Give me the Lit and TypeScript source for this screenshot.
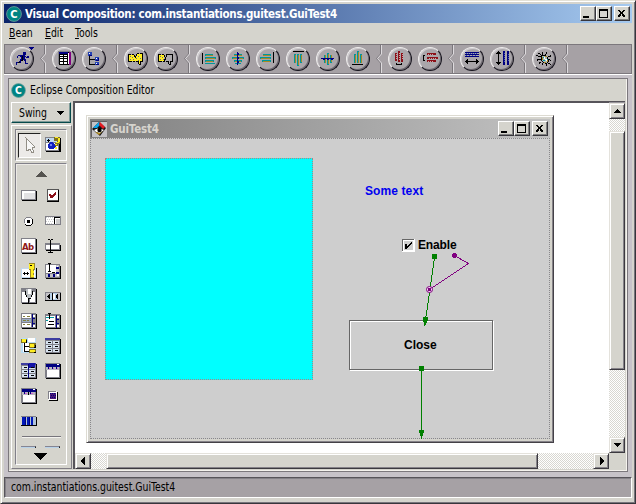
import { LitElement, html, svg, css } from "lit";
import { customElement } from "lit/decorators.js";

// A layer is a fill colour plus a list of "x,y,w,h" pixel blocks.
type Layer = [string, string];
type Icon = Layer[];

const blocks = (layers: Icon) =>
  layers.map(
    ([fill, list]) => svg`<path fill=${fill} d=${list
      .split(" ")
      .map((r) => {
        const [x, y, w, h] = r.split(",");
        return `M${x} ${y}h${w}v${h}h-${w}z`;
      })
      .join("")}></path>`
  );

const shift = (dx: number, dy: number, layers: Icon): Icon =>
  layers.map(([fill, list]) => [
    fill,
    list.split(" ").map((r) => {
      const [x, y, w, h] = r.split(",").map(Number);
      return [x + dx, y + dy, w, h].join();
    }).join(" "),
  ]);

const icon = (layers: Icon, extra: unknown = "", size = 16) =>
  html`<svg width=${size} height=${size} viewBox="0 0 ${size} ${size}" shape-rendering="crispEdges">${blocks(layers)}${extra}</svg>`;

const K = "#000", W = "#fff", N = "#000080", G = "#808088", L = "#c3c2c6", Y = "#ffee20", T = "#00969c", R = "#8c1018", O = "#a58a22";

// ---- toolbar glyphs, drawn in a 16x16 grid ----
const run: Icon = [
  [N, "8,1,3,3 6,4,4,2 5,5,5,1 6,6,4,3 3,4,3,1 2,5,1,2 9,5,2,1 11,6,3,1 12,5,2,1 5,8,3,2 8,8,3,1 10,9,1,4 10,12,3,1 4,10,2,2 1,11,4,1 1,12,1,2 9,9,1,1"],
  [K, "7,5,1,4 6,9,2,1 3,11,2,1"],
];
const tableProps: Icon = [
  [G, "0,0,12,1 0,0,1,13"], [K, "1,1,12,13"], [N, "1,1,9,2"],
  [W, "2,4,3,1 6,4,3,1 2,6,3,1 6,6,3,1 2,8,3,2 6,8,3,2 2,11,3,2 6,11,3,2 10,2,1,11"], ["#800080", "11,1,2,13"],
];
const tree: Icon = [
  ["#2442b4", "2,1,4,4 9,6,4,4 9,11,4,3"], [N, "3,4,3,1 10,9,3,1 10,13,3,1 12,7,1,2"],
  [K, "3,5,1,9 4,8,5,1 4,13,5,1"], [W, "3,2,1,1 10,7,1,1 10,12,1,1"],
];
const film: Icon = [
  [Y, "1,4,5,6 6,5,2,5 8,3,6,8 11,11,2,2"],
  ["#6a6f8a", "2,5,1,1 4,6,1,1 2,8,1,1 5,8,1,1 8,7,1,1 10,5,1,1 12,7,1,1 10,9,1,1"],
  [K, "0,3,1,8 1,3,2,1 4,3,2,1 6,4,1,2 7,5,1,2 8,3,1,2 9,2,2,1 12,2,3,1 14,3,1,8 1,10,3,1 5,10,2,1 8,10,3,1 10,11,1,2 11,13,2,1 12,10,2,1 12,11,1,2"],
];
const filmOpen: Icon = [
  [Y, "1,4,5,6"], ["#aeabae", "8,4,6,6 11,10,2,3"],
  ["#6a6f8a", "2,5,1,1 4,6,1,1 2,8,1,1 5,8,1,1"],
  [K, "0,3,1,8 1,3,2,1 4,3,2,1 6,4,1,2 7,6,1,3 8,3,1,3 9,3,6,1 14,3,1,8 1,10,3,1 5,10,2,1 6,8,1,2 8,10,3,1 10,11,1,2 11,13,2,1 12,10,2,1 12,11,1,2"],
];
const alignLeft: Icon = [[K, "1,2,1,11"], [T, "4,3,8,2 4,6,11,2 4,9,9,2 4,12,10,1"], [O, "5,4,7,1 5,7,9,1 5,10,7,1"]];
const alignCenter: Icon = [[T, "4,3,8,2 2,6,12,2 4,9,8,2 5,12,6,1"], [O, "4,4,8,1 3,7,10,1 5,10,6,1"], [N, "7,1,1,13 8,2,1,2 8,6,1,2 8,10,1,2"]];
const alignRight: Icon = [[K, "13,1,1,11"], [T, "3,3,8,2 0,6,11,2 2,9,9,2"], [O, "3,4,7,1 1,7,9,1 3,10,7,1"]];
const alignTop: Icon = [[K, "3,0,11,1"], [T, "4,3,2,9 7,3,2,12 10,3,2,9"], [O, "5,4,1,8 8,4,1,10 11,4,1,7"]];
const alignMiddle: Icon = [[T, "4,4,2,8 7,2,2,12 10,4,2,8"], [O, "5,4,1,8 8,3,1,10 11,4,1,7"], [N, "1,7,13,1 3,8,2,1 7,8,2,1 11,8,2,1"]];
const alignBottom: Icon = [[K, "2,13,11,1"], [T, "4,3,2,9 7,0,2,12 10,3,2,9"], [O, "5,4,1,8 8,1,1,11 11,4,1,8"]];
const sameCol: Icon = [[R, "3,2,2,8 6,0,2,11 9,2,2,9"], ["#c7a3a5", "4,3,1,1 4,5,1,1 4,7,1,1 7,2,1,1 7,4,1,1 7,6,1,1 7,8,1,1 10,3,1,1 10,5,1,1 10,7,1,1"], [K, "4,12,1,2 5,13,5,1 9,12,1,2"]];
const sameRow: Icon = [[R, "5,2,9,2 5,6,11,2 5,9,9,2"], ["#c7a3a5", "6,3,1,1 8,3,1,1 10,3,1,1 7,7,1,1 9,7,1,1 11,7,1,1 13,7,1,1 6,10,1,1 8,10,1,1 10,10,1,1"], [K, "1,4,2,1 1,4,1,6 1,9,2,1"]];
const sameWidth: Icon = [[N, "1,1,14,1 1,3,14,1 1,5,14,1"], ["#3349a8", "2,2,1,1 4,2,1,1 6,2,1,1 8,2,1,1 10,2,1,1 12,2,1,1 2,4,1,1 5,4,1,1 8,4,1,1 11,4,1,1"], [K, "1,10,14,1 2,9,1,3 3,8,1,5 13,9,1,3 12,8,1,5"]];
const sameHeight: Icon = [[N, "9,0,2,14 13,0,2,14"], ["#4d61b5", "10,2,1,1 10,4,1,1 10,6,1,1 10,8,1,1 10,10,1,1 14,3,1,1 14,5,1,1 14,7,1,1 14,9,1,1"], [K, "4,0,1,14 3,1,3,1 2,2,5,1 3,12,3,1 2,11,5,1"]];
const bug: Icon = [
  ["#a8b6ba", "6,5,5,6 9,7,3,5"],
  [K, "6,4,4,1 5,5,1,5 6,10,1,1 7,11,2,1 9,12,2,1 11,11,1,1 12,8,1,3 11,6,1,2 10,5,1,1 2,2,2,1 4,3,1,1 5,4,1,1 6,1,1,3 10,1,1,2 9,3,1,1 0,4,2,1 2,5,3,1 12,5,3,1 14,4,1,1 1,8,4,1 1,9,1,1 3,11,2,1 3,12,1,1 6,12,1,2 13,8,1,1 14,9,1,1 12,12,2,1 14,13,1,1 10,13,1,2"],
  [W, "8,6,1,2 9,8,2,1 10,9,1,1"], [O, "6,6,1,3 9,5,2,1 11,9,1,2 8,11,2,1"], ["#009ca5", "7,6,1,1 7,9,2,1 11,8,1,1"],
];

const groups: Icon[][] = [
  [shift(1, 0, run)], [shift(2, 0, tableProps), tree], [film, filmOpen],
  [shift(1, 0, alignLeft), alignCenter, alignRight, alignTop, alignMiddle, alignBottom],
  [sameCol, sameRow], [sameWidth, sameHeight], [bug],
];

// ---- palette glyphs ----
const tableGrid = (head: string): Icon => [
  [K, "1,1,15,15"], [G, "0,0,15,15"], ["#d7e3ef", "1,3,6,3 8,3,6,3 1,7,6,3 8,7,6,3 1,11,6,3 8,11,6,3"],
  ["#3c3ca0", "0,0,15,2"], [G, "0,6,15,1 0,10,15,1"], [N, "7,1,1,14"], [head, "8,0,6,5"],
  [K, "3,4,3,1 10,4,3,1 3,8,3,1 10,8,3,1 3,12,3,1 10,12,3,1"],
];
const frame: Icon = [[K, "1,1,15,15"], [G, "0,0,15,15"], [N, "1,1,14,3"], [W, "12,1,2,1"], ["#b7b7c1", "1,4,13,3"], [W, "2,7,12,7"]];
const palette: { art: Icon; text?: string }[] = [
  { art: [[K, "1,12,15,1 15,3,1,10"], [G, "0,2,15,10"], [W, "1,3,13,8"], ["#e2e2e4", "3,5,11,6"]] },
  { art: [["#555", "2,1,12,12"], [K, "13,2,1,12 2,13,12,1"], [W, "3,2,10,10"], [R, "4,6,2,2 5,7,2,3 6,8,2,2 7,7,2,2 8,6,2,2 9,5,2,2 10,4,1,2"]] },
  { art: [[G, "5,4,5,1 4,5,1,1 3,6,1,4 4,10,1,1 10,5,1,1"], [K, "5,12,5,1 10,11,1,1 11,6,1,5 4,11,1,1"], [W, "5,5,5,7 4,6,7,5"], [K, "6,7,3,3"]] },
  { art: [[G, "0,3,16,1 0,3,1,9"], [W, "1,4,9,7 10,4,6,8"], ["#cbcccd", "1,4,1,1 3,4,1,1 5,4,1,1 7,4,1,1 2,6,1,1 4,6,1,1 6,6,1,1 8,6,1,1 1,8,1,1 3,8,1,1 5,8,1,1 7,8,1,1 2,10,1,1 4,10,1,1 6,10,1,1 11,6,4,5"], [K, "9,4,1,8 10,4,6,1"], [G, "1,11,15,1 15,4,1,8"]] },
  { art: [[K, "1,1,15,15"], [G, "0,0,15,15"], [W, "1,1,13,13"]], text: "Ab" },
  { art: [[K, "1,7,15,6"], [G, "0,5,15,7"], [W, "1,7,13,4"], [K, "5,2,1,13 3,1,2,1 6,1,2,1 3,14,2,1 6,14,2,1"]] },
  { art: [[K, "1,15,14,1 15,5,1,11"], ["#c3d9ef", "0,5,15,10"], [W, "1,6,13,8"], [K, "3,9,1,3 2,10,3,1 6,9,1,3 5,10,3,1"], ["#99882a", "8,0,6,7 9,6,4,9"], [Y, "8,1,5,5 10,5,2,9 12,8,1,2 12,12,1,2"], [K, "9,2,2,1"]] },
  { art: [[K, "1,3,15,13"], [G, "0,1,15,14"], [W, "1,2,10,8"], [L, "11,2,3,12 1,11,10,3"], [N, "11,4,3,2 11,9,3,2 3,11,2,3 8,11,2,3"], [K, "3,0,3,1 4,0,1,8 3,8,3,1 7,9,3,1"], [W, "12,3,1,1 12,11,2,2"]] },
  { art: [[K, "1,1,15,15"], [G, "0,0,15,15"], [W, "1,4,4,10 11,4,3,10 5,9,2,5 9,9,2,5"], ["#b9bdc1", "5,1,6,8 6,8,4,2"], [K, "4,3,1,4 5,7,1,2 7,10,3,1 10,7,1,2 11,3,1,4 7,11,1,4"], [W, "7,1,3,5"]] },
  { art: [[G, "0,4,16,1 0,4,1,8"], [K, "0,12,16,1 15,5,1,8"], [L, "1,5,4,7 12,5,3,7"], ["#b8d1e9", "5,5,7,7"], [K, "4,6,1,5 3,7,1,3 2,8,1,1 7,5,1,7 12,6,1,5 11,7,1,3"], [W, "8,6,2,5"]] },
  { art: [[K, "1,1,15,15"], [G, "0,0,15,15"], [W, "1,1,9,4 1,10,9,4 12,2,2,2 12,12,2,2"], ["#9badc5", "1,6,9,3"], [N, "11,1,1,13 12,5,2,1 12,10,2,1"], ["#85813a", "2,3,2,1 6,3,3,1 2,7,3,1 6,7,2,1 2,11,2,1 6,11,3,1"]] },
  { art: [[K, "1,2,15,14"], [G, "0,1,15,14"], [W, "1,3,9,11 12,3,2,2 12,12,2,2"], [N, "11,2,1,13 12,6,2,1 12,10,2,1"], [T, "1,4,8,1 1,7,2,1"], [K, "4,0,1,6 3,0,3,1 4,8,5,1 3,11,6,1"]] },
  { art: [["#b9ddf4", "0,0,15,15"], [W, "2,5,7,9 7,0,7,4"], [K, "3,5,1,9 3,8,5,1 3,13,6,1"], ["#82751f", "0,1,6,4 8,5,7,5 8,11,7,4"], [Y, "1,1,4,3 4,2,1,2 9,6,4,3 9,12,5,2"], [K, "14,7,1,3 13,9,2,1 13,14,2,1 5,2,1,3"]] },
  { art: tableGrid("#3c3ca0").slice(0, 5).concat([[K, "3,4,3,1 10,4,3,1 3,8,3,1 10,8,3,1 3,12,3,1 10,12,3,1"]]) },
  { art: tableGrid("#1414a8") },
  { art: [...frame, ["#d45bd5", "3,5,2,1 7,5,2,1 11,5,2,1"], [N, "3,4,1,2 7,4,1,2 11,4,1,2"]] },
  { art: [...frame, ["#d45bd5", "4,5,2,1 10,5,2,1"], [N, "3,4,1,2 9,4,1,2"], [K, "7,4,1,3"]] },
  { art: [[W, "3,3,9,9"], [G, "3,3,8,1 3,3,1,8"], [K, "12,4,1,9 4,12,9,1"], ["#4d1976", "5,5,6,6"], [N, "5,5,1,1 7,5,1,1 9,5,1,1 6,7,1,1 8,7,1,1 10,7,1,1 5,9,1,1 7,9,1,1 9,9,1,1"]] },
  { art: [[K, "0,12,16,1 15,4,1,9"], [G, "0,3,15,1"], ["#b1c4d9", "1,4,14,8"], ["#0018b9", "1,4,3,8 6,4,2,8 10,4,2,8"], [N, "4,4,1,8 8,4,1,8"]] },
];

const arrowIcon = html`<svg width="16" height="20" viewBox="0 0 16 20" shape-rendering="crispEdges">
  <path d="M4 3L13 12L10 13L12 17L10 18L8 14L5 16Z" fill="#f7f7f7" stroke="#928e86"></path></svg>`;
const beanIcon = icon([
  [K, "1,2,15,14"], [G, "0,1,14,14"], ["#c0d9f0", "1,2,12,4"], [W, "1,7,12,7"], ["#1020c0", "3,8,8,4 5,6,3,7 4,7,5,6"], ["#7284e8", "5,8,2,2"],
  ["#7e7024", "9,1,6,4 12,4,3,4 10,7,3,3"], [Y, "10,1,3,1 13,2,2,4 11,6,3,1 10,8,2,1 10,11,2,2"], [K, "3,3,1,3 2,4,3,1"],
]);

const BadgeC = (size: number) => html`<svg class="badge" width=${size} height=${size} viewBox="0 0 16 16">
  <circle cx="8" cy="8" r="7.4" fill="#008483" stroke="#75a19c" stroke-width=".8"></circle>
  <text x="8" y="12" text-anchor="middle" fill="#fff" font-size="11" font-weight="700" font-family="DejaVu Sans Condensed, sans-serif">C</text></svg>`;

const capIcons: Icon[] = [
  [[K, "2,9,6,2"]],
  [[K, "2,2,9,9"], ["#d5d4ce", "3,4,7,6"]],
  [[K, "3,3,2,1 8,3,2,1 4,4,2,1 7,4,2,1 5,5,3,2 4,7,2,1 7,7,2,1 3,8,3,1 7,8,3,1 3,9,2,1 8,9,2,1 5,4,1,1"]],
];
const captionButtons = html`<div class="caps">
  ${capIcons.map((c) => html`<span class="cap">${icon(c, "", 13)}</span>`)}</div>`;

const arrows: Record<string, string> = {
  up: "M3 8h7v-1h-1v-1h-1v-1h-1v-1h-1v1h-1v1h-1v1h-1z",
  down: "M3 4h7v1h-1v1h-1v1h-1v1h-1v-1h-1v-1h-1v-1h-1z",
  left: "M8 2v8h-1v-1h-1v-1h-1v-1h-1v-2h1v-1h1v-1h1v-1z",
  right: "M5 2v8h1v-1h1v-1h1v-1h1v-2h-1v-1h-1v-1h-1v-1z",
};
const arrow = (dir: string) =>
  html`<span class="sbtn"><svg width="12" height="12" viewBox="0 0 12 12" shape-rendering="crispEdges"><path d=${arrows[dir]}></path></svg></span>`;

@customElement("app-root")
export class AppRoot extends LitElement {
  static styles = css`
    :host { display: block; width: 636px; height: 504px; overflow: hidden; font: 11.5px "DejaVu Sans Condensed", "DejaVu Sans", sans-serif; color: #000; --face: #d5d4cd; cursor: default; }
    * { box-sizing: border-box; }
    svg { display: block; flex: none; }
    .win { height: 504px; display: flex; flex-direction: column; background: var(--face); padding: 2px 2px 5px 2px; border: 1px solid; border-color: #e4e1d6 #37363c #37363c #e4e1d6; box-shadow: inset 1px 1px #fff, inset -1px -1px #77747b; }
    .title { margin: 1px 1px 0; height: 19px; flex: none; display: flex; align-items: center; background: linear-gradient(90deg, #0a246a, #a6caf0); color: #fff; font-weight: 700; padding: 0 2px 0 2px; }
    .title .name { flex: 1; margin-left: 3px; white-space: nowrap; }
    .outer .name { font-size: 11.5px; letter-spacing: -.29px; }
    .caps { display: flex; }
    .cap { width: 16px; height: 15px; background: var(--face); border: 1px solid; border-color: #fff #37363c #37363c #fff; box-shadow: inset -1px -1px #808080; overflow: hidden; }
    .cap:last-child { margin-left: 2px; }
    .menu { height: 21px; flex: none; display: flex; gap: 10px; padding: 3px 6px; }
    .menu u { text-underline-offset: 1px; }
    .tools { height: 30px; flex: none; margin: 0 1px; display: flex; background: #a6a1a5; border: 1px solid #7c787d; padding-left: 2px; }
    .grp { display: flex; }
    .tb { width: 30px; height: 28px; display: flex; align-items: center; justify-content: center; }
    .disc { position: relative; width: 24px; height: 24px; border-radius: 50%; background: #aaa6aa; border: 1px solid; border-color: #eeecec #15121c #15121c #eeecec; box-shadow: inset -1px -1px 0 #6d6870, inset 1px 1px 0 #d0cdd0; padding: 3px 0 0 3px; }
    .drop { position: absolute; left: 18px; top: -1px; }
    .frame { flex: 1; min-height: 0; margin: 0 1px; background: #c7c3c9; border-top: 1px solid #fff; padding: 3px 4px 5px 4px; display: flex; }
    .editor { flex: 1; min-width: 0; background: var(--face); border: 1px solid #7c787d; box-shadow: inset -1px -1px #f5f3ee; display: flex; flex-direction: column; padding: 0 2px 2px; }
    .head { height: 22px; flex: none; display: flex; align-items: center; gap: 4px; }
    .head span, .menu span, .status span, .swing span { display: inline-block; white-space: nowrap; transform: scaleX(.9); transform-origin: 0 50%; }
    .body { flex: 1; min-height: 0; display: flex; }
    .left { width: 62px; display: flex; flex-direction: column; gap: 2px; padding-top: 1px; }
    .swing { width: 60px; height: 21px; flex: none; display: flex; align-items: center; justify-content: space-between; padding: 0 5px 0 7px; border: 1px solid; border-color: #fff #06494b #06494b #fff; box-shadow: inset -1px -1px #7c9997; }
    .pal { width: 61px; flex: 1; min-height: 0; border: 1px solid; border-color: #fff #807d84 #807d84 #fff; padding: 3px 3px 3px; display: flex; flex-direction: column; gap: 2px; }
    .box { border: 1px solid #818089; border-right-color: #fff; border-bottom-color: #fff; box-shadow: inset 1px 1px #eceae6; width: 52px; }
    .pick { height: 32px; flex: none; display: flex; align-items: center; padding-left: 2px; gap: 4px; }
    .pick > svg { margin-top: -2px; }
    .on { width: 23px; height: 25px; padding: 1px 3px; background: #eceae8; border: 1px solid; border-color: #222 #fff #fff #222; }
    .list { flex: 1; display: flex; flex-direction: column; align-items: center; min-height: 0; padding-top: 7px; }
    .items { width: 41px; display: grid; grid-template-columns: 16px 16px; column-gap: 8px; row-gap: 9px; margin-top: 11px; }
    .rule { width: 39px; border-top: 1px solid #77757c; border-bottom: 1px solid #f4f3ef; margin-top: 7px; }
    .peek { width: 41px; display: flex; gap: 9px; margin: 8px 0 5px; }
    .peek i { width: 15px; height: 2px; border-top: 1px solid #858593; border-right: 1px solid #222; background: #b8d2e8; }
    .stage { flex: 1; min-width: 0; display: grid; grid-template-columns: 1fr 16px; grid-template-rows: 1fr 16px; border: solid #57545a; border-width: 1px 0 0 2px; box-shadow: inset 0 1px #98959b; }
    .canvas { background: #fff; padding: 12px 0 0 11px; border-top: 1px solid #57545a; }
    .sb { display: flex; background: repeating-conic-gradient(#fff 0 25%, #d8d7d1 0 50%) 0 0 / 2px 2px; }
    .sb.v { flex-direction: column; margin-top: 1px; }
    .sbtn, .thumb { background: var(--face); border: 1px solid; border-color: #e4e2dc #3b393f #3b393f #e4e2dc; box-shadow: inset 1px 1px #fff, inset -1px -1px #858288; flex: none; }
    .sbtn { width: 16px; height: 16px; padding: 1px; }
    .v .thumb { height: 239px; margin-top: 12px; }
    .h .thumb { width: 432px; margin-left: 15px; }
    .sb .sbtn:last-child { margin-left: auto; }
    .v .sbtn:last-child { margin: auto 0 0; }
    .form { position: relative; width: 468px; height: 328px; background: var(--face); border: 1px solid; border-color: #dddbd2 #444147 #444147 #dddbd2; box-shadow: inset 1px 1px #fff, inset -1px -1px #858288; padding: 3px; display: flex; flex-direction: column; }
    .form .title { margin: 0; background: linear-gradient(90deg, #808080, #c2c2c2); color: #d6d4ce; padding: 0 2px 0 1px; }
    .form .name { font-size: 11.5px; letter-spacing: -.2px; margin-left: 3px; }
    .wire { position: absolute; left: 0; top: 0; }
    .pane { flex: 1; position: relative; background: #cecece; border: 1px dotted #88878a; }
    .cyan { position: absolute; left: 14px; top: 19px; width: 208px; height: 222px; background: #0ff; border: 1px dotted #a98383; }
    .lbl { position: absolute; font: 700 12px "Liberation Sans", Arial, sans-serif; line-height: 14px; white-space: nowrap; }
    .some { left: 274px; top: 45px; color: #0000f0; letter-spacing: .1px; }
    .enable { left: 327px; top: 99px; letter-spacing: -.15px; }
    .chk { position: absolute; left: 311px; top: 100px; }
    .btn { position: absolute; left: 258px; top: 181px; width: 144px; height: 50px; border: 1px solid #666; box-shadow: 1px 1px #fff, inset 1px 1px #fff; }
    .close { left: 313px; top: 199px; }
    .status { height: 21px; flex: none; margin: 0 1px; background: #a6a1a5; border: 1px solid; border-color: #57545a #fff #fff #57545a; box-shadow: inset 1px 1px #858288; padding: 2px 0 0 6px; }
  `;

  render() {
    return html`<div class="win">
      <div class="title outer">${BadgeC(16)}<span class="name">Visual Composition: com.instantiations.guitest.GuiTest4</span>${captionButtons}</div>
      <div class="menu"><span><u>B</u>ean</span><span><u>E</u>dit</span><span><u>T</u>ools</span></div>
      <div class="tools">
        ${groups.map((g, gi) => html`<div class="grp">
          ${g.map((i) => html`<div class="tb"><div class="disc">${icon(i)}${gi === 0
            ? html`<svg class="drop" width="6" height="4" shape-rendering="crispEdges"><path d="M0 0h5v1h-1v1h-1v1h-1v-1h-1v-1h-1z" fill="#000080"></path></svg>` : ""}</div></div>`)}
          <svg width="12" height="28" viewBox="0 0 12 28" fill="none"><path d="M7.5 0V9L3.5 13.5L7.5 18V28" stroke="#7b777c"></path><path d="M8.5 0V9L4.5 13.5L8.5 18V28" stroke="#dedbde"></path></svg>
        </div>`)}
      </div>
      <div class="frame"><div class="editor">
        <div class="head">${BadgeC(15)}<span>Eclipse Composition Editor</span></div>
        <div class="body">
          <div class="left">
            <div class="swing"><span>Swing</span><svg width="8" height="4" shape-rendering="crispEdges"><path d="M0 0h7v1h-1v1h-1v1h-1v1h-1v-1h-1v-1h-1v-1h-1z"></path></svg></div>
            <div class="pal">
              <div class="box pick"><div class="on">${arrowIcon}</div>${beanIcon}</div>
              <div class="box list">
                <svg width="11" height="6" shape-rendering="crispEdges"><path d="M5 0h1v1h1v1h1v1h1v1h1v1h1v1h-11v-1h1v-1h1v-1h1v-1h1v-1h1z" fill="#55534f"></path></svg>
                <div class="items">${palette.map((p) => icon(p.art, p.text
                  ? svg`<text x="1" y="12" font-size="9.5" font-weight="700" fill="#901818" textLength="12" font-family="DejaVu Sans Condensed, sans-serif">${p.text}</text>` : ""))}</div>
                <div class="rule"></div>
                <div class="peek"><i></i><i></i></div>
                <svg width="14" height="7" shape-rendering="crispEdges"><path d="M0 0h13v1h-1v1h-1v1h-1v1h-1v1h-1v1h-1v1h-1v-1h-1v-1h-1v-1h-1v-1h-1v-1h-1v-1h-1z"></path></svg>
              </div>
            </div>
          </div>
          <div class="stage">
            <div class="canvas"><div class="form">
              <div class="title">${icon([[L, "0,0,16,16"], ["#5f5d60", "0,0,16,1 0,0,1,16"]], svg`
                <g shape-rendering="auto"><path d="M8 1L15 7L9 15L1 8Z" fill="#16161a"></path><path d="M8 1L4 5L2 7L6 7L9 4Z" fill="#09a6ee"></path><path d="M9 1L14 6L12 8L8 4Z" fill="#e31a22"></path><path d="M3 9L8 7L13 9L9 12L5 11Z" fill="#fff"></path><path d="M4 11L8 14L12 10L9 12Z" fill="#bc9422"></path><circle cx="8.5" cy="9" r="2.2"></circle></g>`)}<span class="name">GuiTest4</span>${captionButtons}</div>
              <div class="pane">
                <div class="cyan"></div>
                <span class="lbl some">Some text</span>
                <svg class="chk" width="13" height="13" shape-rendering="crispEdges"><path d="M0 0h12v12h-12z" fill="#666"></path><path d="M1 1h11v11h-11zM12 0h1v13h-13v-1h12z" fill="#fff"></path><path d="M2 2h9v9h-9z" fill="#cecece"></path><path d="M3 5h2v2h1v-1h1v-1h1v-1h1v-1h1v2h-1v1h-1v1h-1v1h-1v1h-1v1h-2z"></path></svg>
                <span class="lbl enable">Enable</span>
                <div class="btn"></div><span class="lbl close">Close</span>
                <svg class="wire" width="458" height="300" viewBox="91 139 458 300" shape-rendering="crispEdges" fill="none">
                  <path d="M434.5 258L425.5 320M421.5 368V434" stroke="#008000"></path>
                  <path d="M432 254h5v5h-5zM419 366h5v5h-5zM423 317h5v4h-1v2h-1v2h-1v1h-1v-4h-1zM419 430h5v3h-1v3h-1v3h-1v-3h-1v-3h-1z" fill="#008000"></path>
                  <path d="M456 256.500L468.500 263.500L431 288.500" stroke="#800080"></path>
                  <path d="M453 253h3v1h1v3h-1v1h-3v-1h-1v-3h1z" fill="#800080"></path>
                  <g shape-rendering="auto"><circle cx="429.500" cy="289.500" r="3" fill="#eed9ee" stroke="#800080"></circle></g><path d="M428 288h3v3h-3z" fill="#800080"></path>
                </svg>
              </div>
            </div></div>
            <div class="sb v">${arrow("up")}<div class="thumb"></div>${arrow("down")}</div>
            <div class="sb h">${arrow("left")}<div class="thumb"></div>${arrow("right")}</div>
          </div>
        </div>
      </div></div>
      <div class="status"><span>com.instantiations.guitest.GuiTest4</span></div>
    </div>`;
  }
}
